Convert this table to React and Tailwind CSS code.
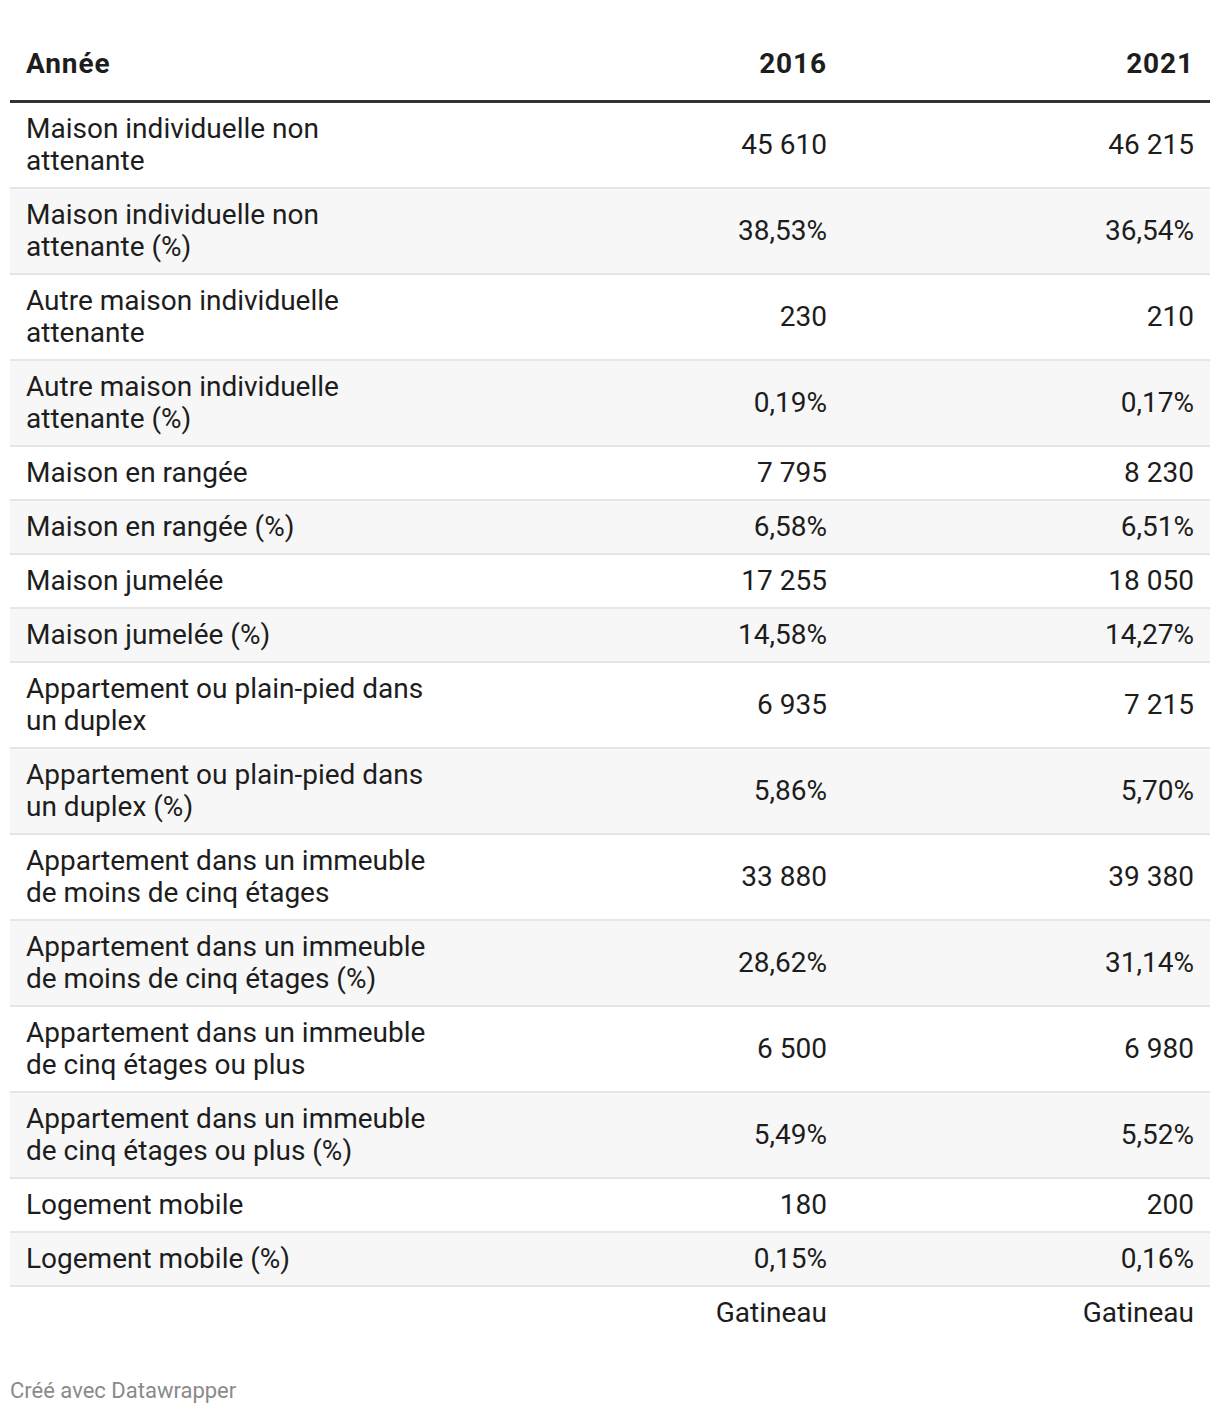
const rows = [
  ["Maison individuelle non attenante", "45 610", "46 215"],
  ["Maison individuelle non attenante (%)", "38,53%", "36,54%"],
  ["Autre maison individuelle attenante", "230", "210"],
  ["Autre maison individuelle attenante (%)", "0,19%", "0,17%"],
  ["Maison en rangée", "7 795", "8 230"],
  ["Maison en rangée (%)", "6,58%", "6,51%"],
  ["Maison jumelée", "17 255", "18 050"],
  ["Maison jumelée (%)", "14,58%", "14,27%"],
  ["Appartement ou plain-pied dans un duplex", "6 935", "7 215"],
  ["Appartement ou plain-pied dans un duplex (%)", "5,86%", "5,70%"],
  ["Appartement dans un immeuble de moins de cinq étages", "33 880", "39 380"],
  ["Appartement dans un immeuble de moins de cinq étages (%)", "28,62%", "31,14%"],
  ["Appartement dans un immeuble de cinq étages ou plus", "6 500", "6 980"],
  ["Appartement dans un immeuble de cinq étages ou plus (%)", "5,49%", "5,52%"],
  ["Logement mobile", "180", "200"],
  ["Logement mobile (%)", "0,15%", "0,16%"],
];

export default function App() {
  return (
    <div
      className="w-[1220px] h-[1414px] bg-white px-[10px] pt-[38px] text-[#1d1d1d]"
      style={{ fontFamily: "Roboto, 'Noto Sans', sans-serif" }}
    >
      <div className="grid grid-cols-[466px_367px_367px] border-b-[3px] border-[#333] text-[28px] font-bold leading-[32px] tracking-[0.9px] pt-[10px] pb-[20px]">
        <div className="pl-[16px]">Année</div>
        <div className="pr-[16px] text-right">2016</div>
        <div className="pr-[16px] text-right">2021</div>
      </div>
      {rows.map((r, i) => (
        <div
          key={i}
          className={
            "grid grid-cols-[466px_367px_367px] items-center border-b-2 border-[#e6e6e6] text-[28px] leading-[32px] py-[10px] " +
            (i % 2 === 1 ? "bg-[#f7f7f7]" : "bg-white")
          }
        >
          <div className="pl-[16px] max-w-[424px]">{r[0]}</div>
          <div className="pr-[16px] text-right">{r[1]}</div>
          <div className="pr-[16px] text-right">{r[2]}</div>
        </div>
      ))}
      <div className="grid grid-cols-[466px_367px_367px] text-[28px] leading-[32px] py-[10px]">
        <div></div>
        <div className="pr-[16px] text-right">Gatineau</div>
        <div className="pr-[16px] text-right">Gatineau</div>
      </div>
      <div className="mt-[40px] text-[22px] leading-[24px] text-[#8a8a8a]">Créé avec Datawrapper</div>
    </div>
  );
}
